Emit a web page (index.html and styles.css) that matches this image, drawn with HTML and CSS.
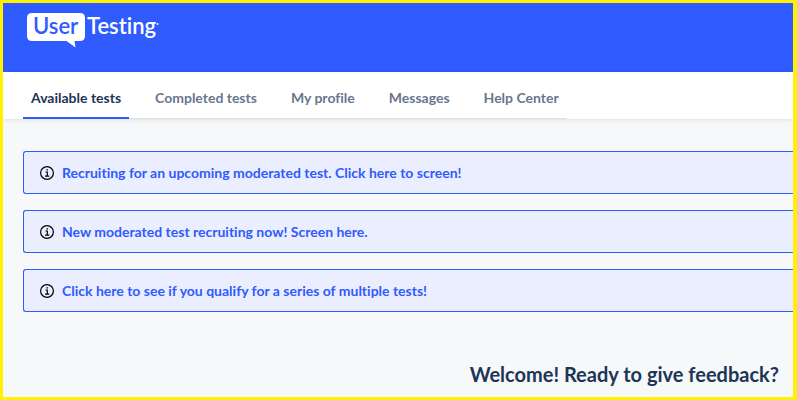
FILE: index.html
```html
<!DOCTYPE html>
<html lang="en">
<head>
    <meta charset="UTF-8">
    <meta name="viewport" content="width=device-width, initial-scale=1.0">
    <title>UserTesting</title>
    <link rel="stylesheet" href="styles.css">
</head>
<body>
    <header class="header">
        <a href="#" class="logo" aria-label="UserTesting">
            <svg width="134" height="36" viewBox="0 0 134 36">
                <path fill="#fff" d="M5 0H53Q58 0 58 5V23Q58 28 53 28H47.500L48.500 34.500L39.500 28H5Q0 28 0 23V5Q0 0 5 0Z"/>
                <text class="logo-user" x="6" y="21">User</text>
                <text class="logo-testing" x="60" y="21">Testing</text>
                <circle cx="130.500" cy="11" r="0.900" fill="#fff"/>
            </svg>
        </a>
    </header>
    <nav class="nav">
        <div class="tabs">
            <a href="#" class="tab active">Available tests</a>
            <a href="#" class="tab">Completed tests</a>
            <a href="#" class="tab">My profile</a>
            <a href="#" class="tab">Messages</a>
            <a href="#" class="tab">Help Center</a>
        </div>
    </nav>
    <main class="content">
        <div class="alert">
            <svg class="info" viewBox="0 0 14 14"><circle cx="7" cy="7" r="6.400"/><path d="M5.500 6H7.300V10M5 10.200H9.300"/><path d="M6.400 3.800H7.900"/></svg>
            <a href="#">Recruiting for an upcoming moderated test. Click here to screen!</a>
        </div>
        <div class="alert">
            <svg class="info" viewBox="0 0 14 14"><circle cx="7" cy="7" r="6.400"/><path d="M5.500 6H7.300V10M5 10.200H9.300"/><path d="M6.400 3.800H7.900"/></svg>
            <a href="#">New moderated test recruiting now! Screen here.</a>
        </div>
        <div class="alert">
            <svg class="info" viewBox="0 0 14 14"><circle cx="7" cy="7" r="6.400"/><path d="M5.500 6H7.300V10M5 10.200H9.300"/><path d="M6.400 3.800H7.900"/></svg>
            <a href="#">Click here to see if you qualify for a series of multiple tests!</a>
        </div>
        <h1>Welcome! Ready to give feedback?</h1>
    </main>
</body>
</html>
```
FILE: styles.css
```css
* {
    box-sizing: border-box;
}
body {
    margin: 0;
    min-height: 100vh;
    border: 3px solid #fff200;
    border-right-width: 4px;
    background-color: #f6f8fa;
    font-family: Lato, "Open Sans", sans-serif;
    font-size: 14px;
    font-weight: bold;
    font-variant-ligatures: none;
    color: #1d3557;
}
a {
    color: inherit;
    text-decoration: none;
}
.header {
    padding: 10px 24px 23px;
    background-color: #2f5bff;
}
.logo,
.logo svg {
    display: block;
}
.logo-user,
.logo-testing {
    font-size: 22px;
    font-weight: 600;
}
.logo-user {
    fill: #2f5bff;
}
.logo-testing {
    fill: #fff;
}
.nav {
    padding: 0 20px;
    background-color: #fff;
    box-shadow: 0 1px 4px rgba(0, 0, 0, 0.1);
}
.tabs {
    display: flex;
    gap: 18px;
    width: fit-content;
    box-shadow: inset 0 -1px #dde0e4;
}
.tab {
    padding: 16px 8px 9px;
    border-bottom: 2px solid transparent;
    line-height: 20px;
    color: #68778d;
}
.tab.active {
    border-color: #2f5bff;
    color: #1d3557;
}
.content {
    padding: 32px 0 0 20px;
}
.alert {
    display: flex;
    align-items: center;
    gap: 8px;
    margin-bottom: 16px;
    padding: 11px 16px 10px;
    border: 1px solid #2f5bff;
    border-right: 0;
    border-radius: 3px 0 0 3px;
    background-color: #ebeefe;
    line-height: 20px;
    color: #2f5bff;
}
.info {
    width: 14px;
    height: 14px;
    fill: none;
    stroke: #000;
    stroke-width: 1.2;
}
h1 {
    margin: 50px 14px 0 0;
    font-size: 20px;
    line-height: 24px;
    text-align: right;
}
```
